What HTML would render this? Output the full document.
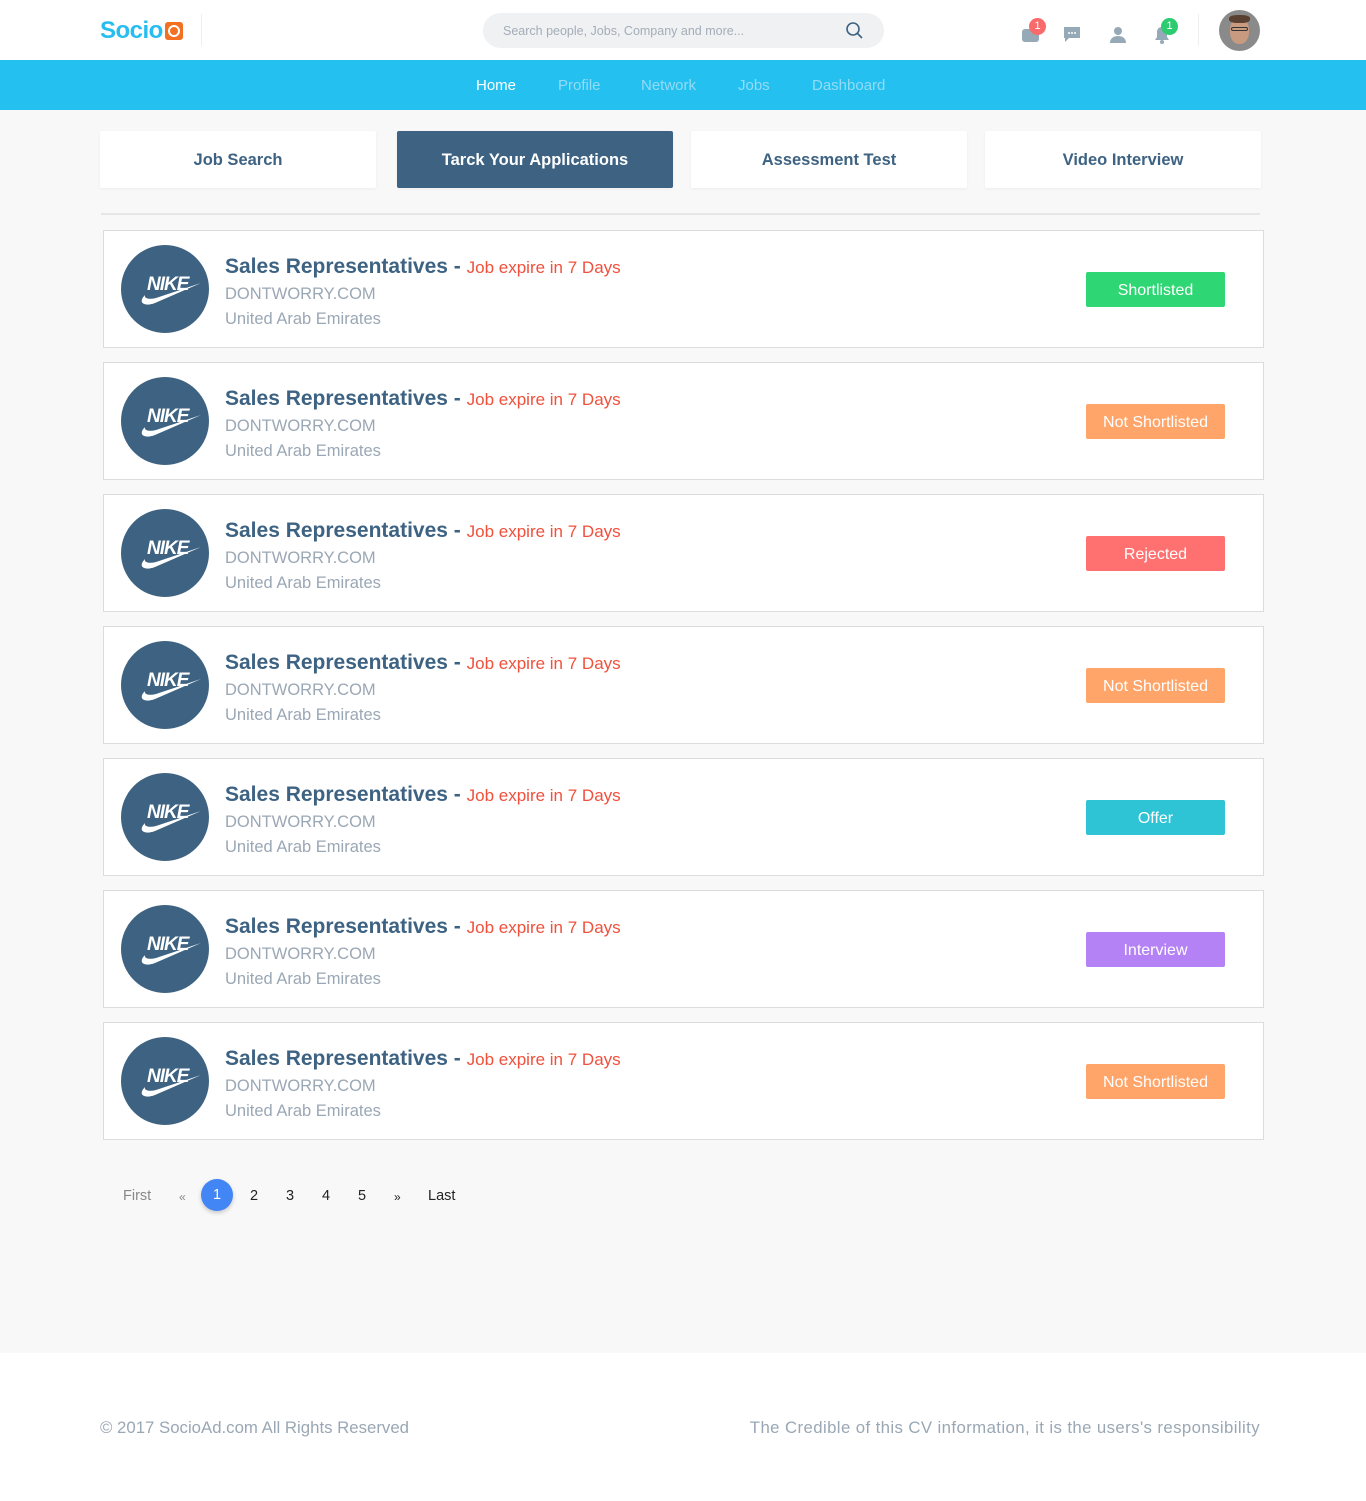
<!DOCTYPE html>
<html><head><meta charset="utf-8"><style>
*{margin:0;padding:0;box-sizing:border-box}
body{width:1366px;height:1501px;background:#fff;font-family:"Liberation Sans",sans-serif;position:relative;overflow:hidden}
.abs{position:absolute}
.main{position:absolute;left:0;top:110px;width:1366px;height:1243px;background:#f8f8f8}
.nav a{position:absolute;top:77px;font-size:15px;color:#94dbf5;white-space:nowrap}
.tab{position:absolute;top:131px;width:276px;height:57px;background:#fff;display:flex;align-items:center;justify-content:center;padding-top:2px;font-weight:bold;font-size:16.5px;color:#3d6282;box-shadow:0 1px 3px rgba(0,0,0,.05);border-radius:2px}
.card{position:absolute;left:103px;width:1161px;height:118px;background:#fff;border:1px solid #dcdcdc}
.logo{position:absolute;left:17px;top:14px;width:88px;height:88px}
.t{position:absolute;left:121px;top:24px;white-space:nowrap;font-size:21px;font-weight:bold;color:#3d6282}
.t span{font-weight:normal;font-size:17px;color:#f0503c}
.d{position:absolute;left:121px;top:54px;font-size:16.5px;color:#9aa7b4}
.l{position:absolute;left:121px;top:79px;font-size:16.5px;color:#9aa7b4}
.b{position:absolute;left:982px;top:41px;width:139px;height:35px;padding-top:2px;border-radius:2px;color:#fff;font-size:16px;display:flex;align-items:center;justify-content:center}
.pg{position:absolute;top:1188px;font-size:14.5px;color:#222}
</style></head><body>
<div class="abs" style="left:100px;top:17px;font-size:24px;font-weight:bold;color:#28bdf0;letter-spacing:-0.5px">Socio</div>
<div class="abs" style="left:165px;top:22px;width:18px;height:18px;background:#f36f21;border-radius:3px"><div style="position:absolute;left:3px;top:3px;width:12px;height:12px;border:2.5px solid #fff;border-radius:50%"></div></div>
<div class="abs" style="left:201px;top:14px;width:1px;height:32px;background:#eee"></div>
<div class="abs" style="left:483px;top:13px;width:401px;height:35px;background:#f0f1f3;border-radius:18px"></div>
<div class="abs" style="left:503px;top:24px;font-size:12.5px;color:#a3adb8">Search people, Jobs, Company and more...</div>
<svg class="abs" style="left:845px;top:21px" width="19" height="19" viewBox="0 0 19 19"><circle cx="8" cy="8" r="6" fill="none" stroke="#3d6282" stroke-width="1.6"/><path d="M12.5 12.5L17 17" stroke="#3d6282" stroke-width="1.6"/></svg>
<svg class="abs" style="left:1020px;top:22px" width="22" height="22" viewBox="0 0 22 22"><rect x="2" y="7" width="17" height="13" rx="3" fill="#95a9b6"/></svg>
<div class="abs" style="left:1029px;top:18px;width:17px;height:17px;border-radius:50%;background:#f96a6a;color:#fff;font-size:11px;text-align:center;line-height:17px">1</div>
<svg class="abs" style="left:1063px;top:26px" width="18" height="18" viewBox="0 0 18 18"><path d="M1 1h16v11H6l-4 4V12H1z" fill="#95a9b6"/><circle cx="6" cy="7" r="1" fill="#fff"/><circle cx="9" cy="7" r="1" fill="#fff"/><circle cx="12" cy="7" r="1" fill="#fff"/></svg>
<svg class="abs" style="left:1109px;top:26px" width="18" height="18" viewBox="0 0 18 18"><circle cx="9" cy="5" r="4" fill="#95a9b6"/><path d="M1 17c0-5 4-7 8-7s8 2 8 7z" fill="#95a9b6"/></svg>
<svg class="abs" style="left:1154px;top:26px" width="16" height="18" viewBox="0 0 16 18"><path d="M8 1c3 0 5 2 5 5v5l2 3H1l2-3V6c0-3 2-5 5-5z" fill="#95a9b6"/><circle cx="8" cy="16" r="2" fill="#95a9b6"/></svg>
<div class="abs" style="left:1161px;top:18px;width:17px;height:17px;border-radius:50%;background:#2ecc71;color:#fff;font-size:11px;text-align:center;line-height:17px">1</div>
<div class="abs" style="left:1198px;top:14px;width:1px;height:32px;background:#eee"></div>
<div class="abs" style="left:1219px;top:10px;width:41px;height:41px;border-radius:50%;background:#8a8a8a;overflow:hidden"><div style="position:absolute;left:11px;top:8px;width:19px;height:26px;border-radius:45%;background:#c89a80"></div><div style="position:absolute;left:10px;top:5px;width:21px;height:8px;border-radius:40%;background:#5a4030"></div><div style="position:absolute;left:12px;top:17px;width:17px;height:4px;border:1px solid #333;border-radius:2px"></div></div>
<div class="abs" style="left:0;top:60px;width:1366px;height:50px;background:#24c0f0"></div>
<div class="nav"><a style="left:476px;color:#fff">Home</a><a style="left:558px">Profile</a><a style="left:641px">Network</a><a style="left:738px">Jobs</a><a style="left:812px">Dashboard</a></div>
<div class="main"></div>
<div class="tab" style="left:100px">Job Search</div>
<div class="tab" style="left:397px;background:#3d6282;color:#fff">Tarck Your Applications</div>
<div class="tab" style="left:691px">Assessment Test</div>
<div class="tab" style="left:985px">Video Interview</div>
<div class="abs" style="left:101px;top:213px;width:1159px;height:2px;background:#e6e6e6"></div>

<div class="card" style="top:230px"><svg class="logo" viewBox="0 0 88 88"><circle cx="44" cy="44" r="44" fill="#3d6282"/><text x="26" y="45" font-family="Liberation Sans" font-weight="bold" font-style="italic" font-size="19" fill="#fff" letter-spacing="-1">NIKE</text><path d="M24 50c-8 8 0 12 10 8l46-20-45 15c-8 2-12 0-11-3z" fill="#fff"/></svg><div class="t">Sales Representatives - <span>Job expire in 7 Days</span></div><div class="d">DONTWORRY.COM</div><div class="l">United Arab Emirates</div><div class="b" style="background:#2fd674">Shortlisted</div></div>
<div class="card" style="top:362px"><svg class="logo" viewBox="0 0 88 88"><circle cx="44" cy="44" r="44" fill="#3d6282"/><text x="26" y="45" font-family="Liberation Sans" font-weight="bold" font-style="italic" font-size="19" fill="#fff" letter-spacing="-1">NIKE</text><path d="M24 50c-8 8 0 12 10 8l46-20-45 15c-8 2-12 0-11-3z" fill="#fff"/></svg><div class="t">Sales Representatives - <span>Job expire in 7 Days</span></div><div class="d">DONTWORRY.COM</div><div class="l">United Arab Emirates</div><div class="b" style="background:#ffa56a">Not Shortlisted</div></div>
<div class="card" style="top:494px"><svg class="logo" viewBox="0 0 88 88"><circle cx="44" cy="44" r="44" fill="#3d6282"/><text x="26" y="45" font-family="Liberation Sans" font-weight="bold" font-style="italic" font-size="19" fill="#fff" letter-spacing="-1">NIKE</text><path d="M24 50c-8 8 0 12 10 8l46-20-45 15c-8 2-12 0-11-3z" fill="#fff"/></svg><div class="t">Sales Representatives - <span>Job expire in 7 Days</span></div><div class="d">DONTWORRY.COM</div><div class="l">United Arab Emirates</div><div class="b" style="background:#ff7070">Rejected</div></div>
<div class="card" style="top:626px"><svg class="logo" viewBox="0 0 88 88"><circle cx="44" cy="44" r="44" fill="#3d6282"/><text x="26" y="45" font-family="Liberation Sans" font-weight="bold" font-style="italic" font-size="19" fill="#fff" letter-spacing="-1">NIKE</text><path d="M24 50c-8 8 0 12 10 8l46-20-45 15c-8 2-12 0-11-3z" fill="#fff"/></svg><div class="t">Sales Representatives - <span>Job expire in 7 Days</span></div><div class="d">DONTWORRY.COM</div><div class="l">United Arab Emirates</div><div class="b" style="background:#ffa56a">Not Shortlisted</div></div>
<div class="card" style="top:758px"><svg class="logo" viewBox="0 0 88 88"><circle cx="44" cy="44" r="44" fill="#3d6282"/><text x="26" y="45" font-family="Liberation Sans" font-weight="bold" font-style="italic" font-size="19" fill="#fff" letter-spacing="-1">NIKE</text><path d="M24 50c-8 8 0 12 10 8l46-20-45 15c-8 2-12 0-11-3z" fill="#fff"/></svg><div class="t">Sales Representatives - <span>Job expire in 7 Days</span></div><div class="d">DONTWORRY.COM</div><div class="l">United Arab Emirates</div><div class="b" style="background:#2ec3d5">Offer</div></div>
<div class="card" style="top:890px"><svg class="logo" viewBox="0 0 88 88"><circle cx="44" cy="44" r="44" fill="#3d6282"/><text x="26" y="45" font-family="Liberation Sans" font-weight="bold" font-style="italic" font-size="19" fill="#fff" letter-spacing="-1">NIKE</text><path d="M24 50c-8 8 0 12 10 8l46-20-45 15c-8 2-12 0-11-3z" fill="#fff"/></svg><div class="t">Sales Representatives - <span>Job expire in 7 Days</span></div><div class="d">DONTWORRY.COM</div><div class="l">United Arab Emirates</div><div class="b" style="background:#b582f5">Interview</div></div>
<div class="card" style="top:1022px"><svg class="logo" viewBox="0 0 88 88"><circle cx="44" cy="44" r="44" fill="#3d6282"/><text x="26" y="45" font-family="Liberation Sans" font-weight="bold" font-style="italic" font-size="19" fill="#fff" letter-spacing="-1">NIKE</text><path d="M24 50c-8 8 0 12 10 8l46-20-45 15c-8 2-12 0-11-3z" fill="#fff"/></svg><div class="t">Sales Representatives - <span>Job expire in 7 Days</span></div><div class="d">DONTWORRY.COM</div><div class="l">United Arab Emirates</div><div class="b" style="background:#ffa56a">Not Shortlisted</div></div>

<div class="pg" style="left:123px;color:#888">First</div>
<div class="pg" style="left:179px;color:#888;font-size:12px;top:1190px">«</div>
<div class="abs" style="left:201px;top:1179px;width:32px;height:32px;border-radius:50%;background:#4285f4;color:#fff;font-size:14.5px;text-align:center;line-height:32px;box-shadow:0 2px 4px rgba(0,0,0,.2)">1</div>
<div class="pg" style="left:250px">2</div><div class="pg" style="left:286px">3</div><div class="pg" style="left:322px">4</div><div class="pg" style="left:358px">5</div>
<div class="pg" style="left:394px;font-size:12px;top:1190px">»</div>
<div class="pg" style="left:428px">Last</div>
<div class="abs" style="left:100px;top:1418px;font-size:16.8px;color:#9aa7b4">© 2017 SocioAd.com All Rights Reserved</div>
<div class="abs" style="right:106px;top:1418px;font-size:16.8px;letter-spacing:0.4px;color:#9aa7b4">The Credible of this CV information, it is the users's responsibility</div>
</body></html>
